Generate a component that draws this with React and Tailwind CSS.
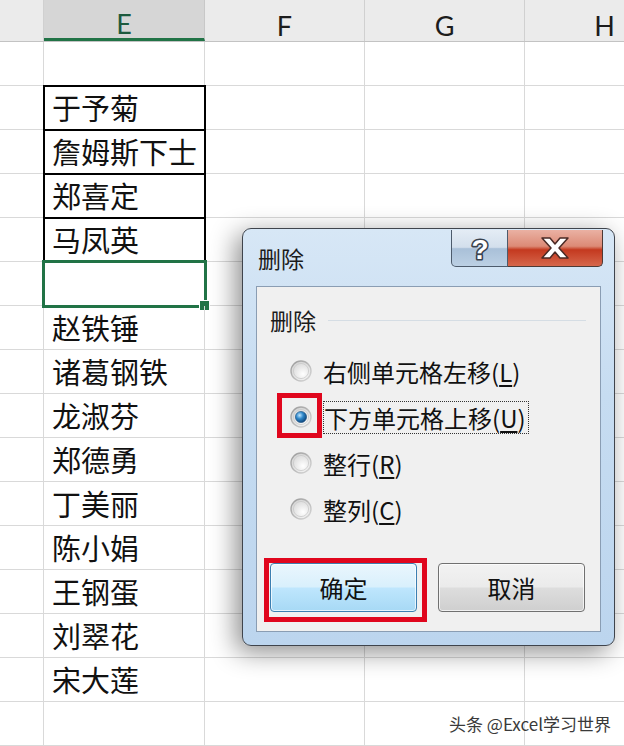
import { useId } from "react";

const cjk = "font-['Noto_Sans_CJK_SC','Noto_Sans',sans-serif]";

const rows = [
  { name: "", kind: "plain" },
  { name: "于予菊", kind: "boxed" },
  { name: "詹姆斯下士", kind: "boxed" },
  { name: "郑喜定", kind: "boxed" },
  { name: "马凤英", kind: "boxed" },
  { name: "", kind: "selected" },
  { name: "赵铁锤", kind: "plain" },
  { name: "诸葛钢铁", kind: "plain" },
  { name: "龙淑芬", kind: "plain" },
  { name: "郑德勇", kind: "plain" },
  { name: "丁美丽", kind: "plain" },
  { name: "陈小娟", kind: "plain" },
  { name: "王钢蛋", kind: "plain" },
  { name: "刘翠花", kind: "plain" },
  { name: "宋大莲", kind: "plain" },
  { name: "", kind: "plain" },
];

const options = [
  { label: "右侧单元格左移", key: "L" },
  { label: "下方单元格上移", key: "U", checked: true },
  { label: "整行", key: "R" },
  { label: "整列", key: "C" },
];

function Radio({ checked }) {
  const id = useId().replace(/:/g, "");
  return (
    <svg width="22" height="22" viewBox="0 0 22 22" className="shrink-0">
      <defs>
        <linearGradient id={`rim${id}`} x1="0" y1="0" x2="1" y2="1">
          <stop offset="0" stopColor="#9a9a9a" />
          <stop offset="1" stopColor="#d8d8d8" />
        </linearGradient>
        <radialGradient id={`face${id}`} cx="0.6" cy="0.65" r="0.6">
          <stop offset="0" stopColor="#ffffff" />
          <stop offset="1" stopColor="#d9d9d9" />
        </radialGradient>
        <radialGradient id={`dot${id}`} cx="0.38" cy="0.35" r="0.7">
          <stop offset="0" stopColor="#bfe6ff" />
          <stop offset="0.45" stopColor="#2f87c9" />
          <stop offset="1" stopColor="#0b3f73" />
        </radialGradient>
      </defs>
      <circle cx="11" cy="11" r="10" fill={`url(#face${id})`} stroke={`url(#rim${id})`} strokeWidth="1.4" />
      <circle cx="11" cy="11" r="7.6" fill="none" stroke="#c9c9c9" strokeWidth="0.8" />
      {checked && <circle cx="11" cy="11" r="5.6" fill={`url(#dot${id})`} stroke="#1b4f80" strokeWidth="0.6" />}
    </svg>
  );
}

function Sheet() {
  return (
    <div className="w-[624px] h-[746px] overflow-hidden bg-white">
      <div className="flex h-[42px] bg-[#ebebeb] border-b border-[#c3c3c3] font-['Lato','Open_Sans',sans-serif] text-[27px] leading-none">
        <div className="w-[44px] shrink-0 border-r border-[#d0d0d0]" />
        <div className="w-[161px] shrink-0 flex items-center justify-center pt-[9px] bg-[#d6d6d6] border-r border-[#c8c8c8] border-b-[3px] border-b-[#217346] text-[#1d5a3e]">
          E
        </div>
        {["F", "G", "H"].map((c) => (
          <div key={c} className="w-[160px] shrink-0 flex items-center justify-center pt-[9px] border-r border-[#d0d0d0] text-[#1c1c1c]">
            {c}
          </div>
        ))}
      </div>
      {rows.map((r, i) => (
        <div key={i} className="flex h-[44px]">
          <div className="w-[44px] shrink-0 border-r border-b border-[#d9d9d9]" />
          <div
            className={
              "relative w-[161px] shrink-0 flex items-center pl-[8px] border-r border-b border-[#d9d9d9] text-[29px] text-[#111] " +
              cjk +
              (r.kind === "boxed" ? " outline-2 outline-black -outline-offset-1" : "") +
              (r.kind === "selected" ? " outline-[3px] outline-[#217346] -outline-offset-1" : "")
            }
          >
            {r.name}
            {r.kind === "selected" && (
              <span className="absolute -right-[6px] -bottom-[6px] w-[11px] h-[11px] bg-[#217346] border border-white" />
            )}
          </div>
          <div className="w-[160px] shrink-0 border-r border-b border-[#d9d9d9]" />
          <div className="w-[160px] shrink-0 border-r border-b border-[#d9d9d9]" />
          <div className="w-[160px] shrink-0 border-b border-[#d9d9d9]" />
        </div>
      ))}
    </div>
  );
}

function Dialog() {
  return (
    <div
      className={
        "absolute left-[242px] top-[228px] w-[373px] h-[418px] flex flex-col rounded-[9px] border border-[#3f444c] bg-[linear-gradient(180deg,#d7e7f6_0%,#c6dcf1_40%,#bcd5ee_100%)] shadow-[-6px_6px_26px_rgba(0,0,0,0.45)] " +
        cjk
      }
    >
      <div className="relative h-[57px] shrink-0 flex items-center pl-[15px] pt-[2px] text-[23px] text-[#1b1b1b]">
        删除
        <div className="absolute top-[1px] left-[208px] flex">
          <div className="w-[57px] h-[37px] flex items-center justify-center rounded-bl-[5px] border border-t-0 border-[#4d5b6c] bg-[linear-gradient(180deg,#e4ecf5_0%,#d3dfec_48%,#a9c0d8_52%,#bcd0e4_100%)]">
            <svg width="26" height="34" viewBox="0 0 26 34" className="overflow-visible">
              <text
                x="13"
                y="28"
                textAnchor="middle"
                fontFamily="Liberation Sans, sans-serif"
                fontWeight="bold"
                fontSize="28"
                fill="#ffffff"
                stroke="#39434f"
                strokeWidth="3.2"
                paintOrder="stroke"
                strokeLinejoin="round"
              >
                ?
              </text>
            </svg>
          </div>
          <div className="w-[95px] h-[37px] flex items-center justify-center rounded-br-[5px] border border-l-0 border-t-0 border-[#4d3a36] bg-[linear-gradient(180deg,#eab1a3_0%,#dc8a76_45%,#c4391f_55%,#d6674c_100%)]">
            <svg width="32" height="24" viewBox="0 0 32 24">
              <path
                d="M3 2 L11 2 L16 8 L21 2 L29 2 L20 12 L29 22 L21 22 L16 16 L11 22 L3 22 L12 12 Z"
                fill="#ffffff"
                stroke="#4a2a25"
                strokeWidth="1.5"
                strokeLinejoin="round"
              />
            </svg>
          </div>
        </div>
      </div>
      <div className="flex-1 mx-[13px] mb-[13px] flex flex-col border border-[#8a9db3] bg-[#f0f0f0]">
        <div className="flex items-center pt-[19px] pl-[13px] pr-[14px] text-[23px] text-[#1b1b1b] leading-[28px]">
          删除
          <div className="flex-1 ml-[12px] h-px bg-[#d5dde4]" />
        </div>
        <div className="mt-[14px] flex flex-col">
          {options.map((o) => (
            <div key={o.key} className="h-[46px] flex items-center pl-[33px] gap-[11px] text-[24px] text-[#111]">
              <Radio checked={o.checked} />
              <span className={"leading-[31px] " + (o.checked ? "border border-dotted border-[#333] pr-[2px]" : "")}>
                {o.label}(<span className="underline underline-offset-[3px]">{o.key}</span>)
              </span>
            </div>
          ))}
        </div>
        <div className="mt-auto mb-[19px] flex gap-[21px] pl-[13px]">
          <button className="w-[147px] h-[49px] rounded-[4px] border border-[#3c7fb1] bg-[linear-gradient(180deg,#eaf6fd_0%,#d9f0fc_48%,#bee6fd_52%,#a7d9f5_100%)] text-[24px] text-[#111] shadow-[inset_0_0_0_1px_rgba(255,255,255,0.7)]">
            确定
          </button>
          <button className="w-[147px] h-[49px] rounded-[4px] border border-[#707070] bg-[linear-gradient(180deg,#f2f2f2_0%,#ebebeb_48%,#dddddd_52%,#cfcfcf_100%)] text-[24px] text-[#111] shadow-[inset_0_0_0_1px_rgba(255,255,255,0.7)]">
            取消
          </button>
        </div>
      </div>
      <div className="absolute left-[34px] top-[164px] w-[45px] h-[45px] border-[5px] border-[#e0061d]" />
      <div className="absolute left-[21px] top-[329px] w-[163px] h-[64px] border-[5px] border-[#e0061d]" />
    </div>
  );
}

export default function App() {
  return (
    <div className="relative w-[624px] h-[746px] overflow-hidden bg-white">
      <Sheet />
      <Dialog />
      <div className={"absolute right-[13px] top-[711px] text-[17px] text-[#3a3a3a] [text-shadow:0_0_2px_#fff] " + cjk}>
        头条 @Excel学习世界
      </div>
    </div>
  );
}
